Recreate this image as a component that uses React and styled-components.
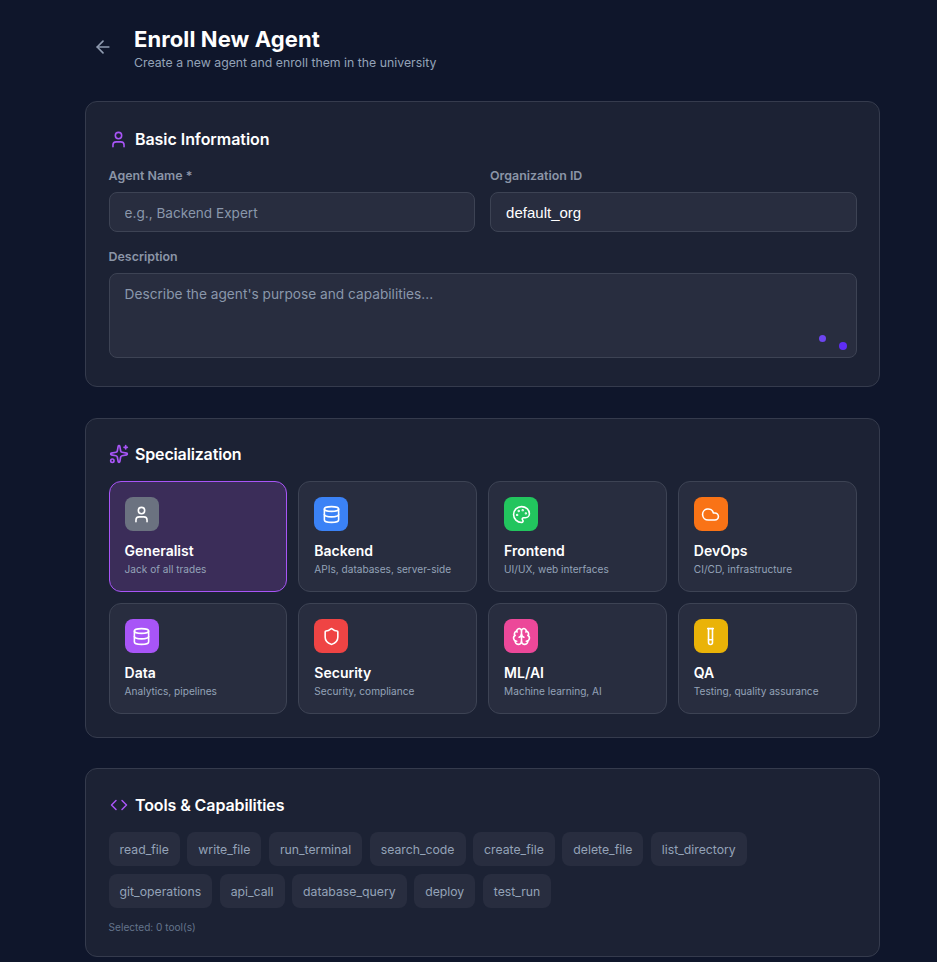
import React from "react";
import styled, { createGlobalStyle } from "styled-components";
import { ArrowLeft, User, Sparkles, Code, Database, Palette, Cloud, Shield, Brain, TestTube } from "lucide-react";

const Global = createGlobalStyle`
  html, body { margin: 0; padding: 0; background: #0f162b; }
  body { font-family: Inter, "Noto Sans", sans-serif; color: #fff; }
  * { box-sizing: border-box; }
`;

const Page = styled.main`
  width: 937px;
  height: 962px;
  overflow: hidden;
  padding: 24px 57px 0 85px;
  background: #0f162b;
  display: flex;
  flex-direction: column;
  gap: 30px;
`;
const Header = styled.header`
  display: flex;
  align-items: center;
  gap: 14px;
  height: 46px;
  margin-bottom: 1px;
`;
const BackButton = styled.button`
  width: 35px;
  height: 36px;
  background: none;
  border: 0;
  padding: 0;
  display: flex;
  align-items: center;
  justify-content: center;
  color: #8f9bb0;
`;
const Title = styled.h1`
  margin: 0;
  font-size: 22px;
  letter-spacing: 0.1px;
  line-height: 30px;
  font-weight: 700;
  color: #fff;
`;
const Subtitle = styled.p`
  margin: 2px 0 0;
  font-size: 12.3px;
  line-height: 14px;
  color: #94a3b8;
`;
const Card = styled.section`
  background: #1c2234;
  border: 1px solid #353b4d;
  border-radius: 12px;
  padding: ${(p) => p.$top}px 22.4px ${(p) => p.$bottom}px 22.6px;
  margin-bottom: ${(p) => p.$after || 0}px;
`;
const CardTitle = styled.h2`
  margin: 0 0 ${(p) => p.$gap || 14}px;
  display: flex;
  align-items: center;
  gap: 6.4px;
  font-size: 16px;
  letter-spacing: ${(p) => p.$track || 0}px;
  line-height: 26px;
  font-weight: 600;
  color: #fff;
`;
const TitleIcon = styled.span`
  width: 20px;
  height: 20px;
  flex: none;
  display: flex;
  align-items: center;
  justify-content: center;
  color: #a855f7;
`;
const FieldGrid = styled.div`
  display: grid;
  grid-template-columns: 1fr 1fr;
  gap: 17px 15px;
`;
const Field = styled.div`
  grid-column: ${(p) => (p.$wide ? "1 / -1" : "auto")};
  position: relative;
`;
const Label = styled.label`
  display: block;
  font-size: 12.4px;
  line-height: 16px;
  font-weight: 600;
  color: #8b95a7;
  margin-bottom: 8px;
`;
const Input = styled.input`
  display: block;
  width: 100%;
  height: 40px;
  padding: 1px 15px 0;
  background: #282d3f;
  border: 1px solid #3d4354;
  border-radius: 8px;
  color: #fff;
  font-family: "Liberation Sans", Arial, sans-serif;
  font-size: 15px;
  &::placeholder {
    color: #8a97ab;
    font-family: Inter, sans-serif;
    font-size: 13.6px;
    opacity: 1;
  }
`;
const TextArea = styled.textarea`
  display: block;
  width: 100%;
  height: 85px;
  padding: 12px 15px;
  background: #282d3f;
  border: 1px solid #3d4354;
  border-radius: 8px;
  color: #fff;
  font-family: Inter, sans-serif;
  font-size: 13.7px;
  resize: none;
  &::placeholder { color: #8a97ab; opacity: 1; }
`;
const Dot = styled.span`
  position: absolute;
  border-radius: 50%;
  left: ${(p) => p.$x}px;
  top: ${(p) => p.$y}px;
  width: ${(p) => p.$s}px;
  height: ${(p) => p.$s}px;
  background: ${(p) => p.$c};
`;
const SpecGrid = styled.div`
  display: grid;
  grid-template-columns: repeat(4, 1fr);
  gap: 11px;
`;
const SpecCard = styled.button`
  height: 111px;
  padding: 15px;
  text-align: left;
  font-family: inherit;
  display: flex;
  flex-direction: column;
  background: ${(p) => (p.$active ? "#3b2d59" : "#282d3f")};
  border: 1px solid ${(p) => (p.$active ? "#a855f7" : "#3d4354")};
  border-radius: 12px;
`;
const IconTile = styled.span`
  width: 34px;
  height: 34px;
  flex: none;
  border-radius: 8px;
  background: ${(p) => p.$bg};
  color: #fff;
  display: flex;
  align-items: center;
  justify-content: center;
  margin-bottom: 10px;
`;
const SpecName = styled.span`
  font-size: 14px;
  line-height: 20px;
  font-weight: 600;
  color: #fff;
`;
const SpecDesc = styled.span`
  font-size: 10.1px;
  line-height: 16px;
  color: #94a3b8;
`;
const Chips = styled.div`
  display: flex;
  flex-wrap: wrap;
  gap: 8px 7.5px;
  max-width: 660px;
`;
const Chip = styled.button`
  height: 34px;
  padding: 0 11px;
  border: 0;
  border-radius: 8px;
  background: #282d3f;
  color: #94a3b8;
  font-family: inherit;
  font-size: 12.25px;
`;
const Note = styled.p`
  margin: 11px 0 0;
  font-size: 10.1px;
  line-height: 16px;
  color: #64748b;
`;

const specs = [
  { name: "Generalist", desc: "Jack of all trades", bg: "#6b7280", Icon: User, active: true },
  { name: "Backend", desc: "APIs, databases, server-side", bg: "#3b82f6", Icon: Database },
  { name: "Frontend", desc: "UI/UX, web interfaces", bg: "#22c55e", Icon: Palette },
  { name: "DevOps", desc: "CI/CD, infrastructure", bg: "#f97316", Icon: Cloud },
  { name: "Data", desc: "Analytics, pipelines", bg: "#a855f7", Icon: Database },
  { name: "Security", desc: "Security, compliance", bg: "#ef4444", Icon: Shield },
  { name: "ML/AI", desc: "Machine learning, AI", bg: "#ec4899", Icon: Brain },
  { name: "QA", desc: "Testing, quality assurance", bg: "#eab308", Icon: TestTube },
];
const tools = ["read_file", "write_file", "run_terminal", "search_code", "create_file", "delete_file", "list_directory", "git_operations", "api_call", "database_query", "deploy", "test_run"];

export default function App() {
  return (
    <>
      <Global />
      <Page>
        <Header>
          <BackButton aria-label="Back"><ArrowLeft size={20} /></BackButton>
          <div>
            <Title>Enroll New Agent</Title>
            <Subtitle>Create a new agent and enroll them in the university</Subtitle>
          </div>
        </Header>
        <Card $top={24} $bottom={28} $after={1}>
          <CardTitle $gap={16} $track={-0.05}><TitleIcon><User size={19} /></TitleIcon>Basic Information</CardTitle>
          <FieldGrid>
            <Field>
              <Label>Agent Name *</Label>
              <Input placeholder="e.g., Backend Expert" />
            </Field>
            <Field>
              <Label>Organization ID</Label>
              <Input defaultValue="default_org" />
            </Field>
            <Field $wide>
              <Label>Description</Label>
              <TextArea placeholder="Describe the agent's purpose and capabilities..." />
              <Dot $x={710.4} $y={86} $s={7} $c="#6d45f0" />
              <Dot $x={730.2} $y={93} $s={8} $c="#5f2df5" />
            </Field>
          </FieldGrid>
        </Card>
        <Card $top={22} $bottom={23}>
          <CardTitle $track={-0.15}><TitleIcon><Sparkles size={20} /></TitleIcon>Specialization</CardTitle>
          <SpecGrid>
            {specs.map(({ name, desc, bg, Icon, active }) => (
              <SpecCard key={name} $active={active}>
                <IconTile $bg={bg}><Icon size={19} /></IconTile>
                <SpecName>{name}</SpecName>
                <SpecDesc>{desc}</SpecDesc>
              </SpecCard>
            ))}
          </SpecGrid>
        </Card>
        <Card $top={23} $bottom={21}>
          <CardTitle $track={-0.1}><TitleIcon><Code size={18} /></TitleIcon>Tools &amp; Capabilities</CardTitle>
          <Chips>
            {tools.map((t) => <Chip key={t}>{t}</Chip>)}
          </Chips>
          <Note>Selected: 0 tool(s)</Note>
        </Card>
      </Page>
    </>
  );
}
